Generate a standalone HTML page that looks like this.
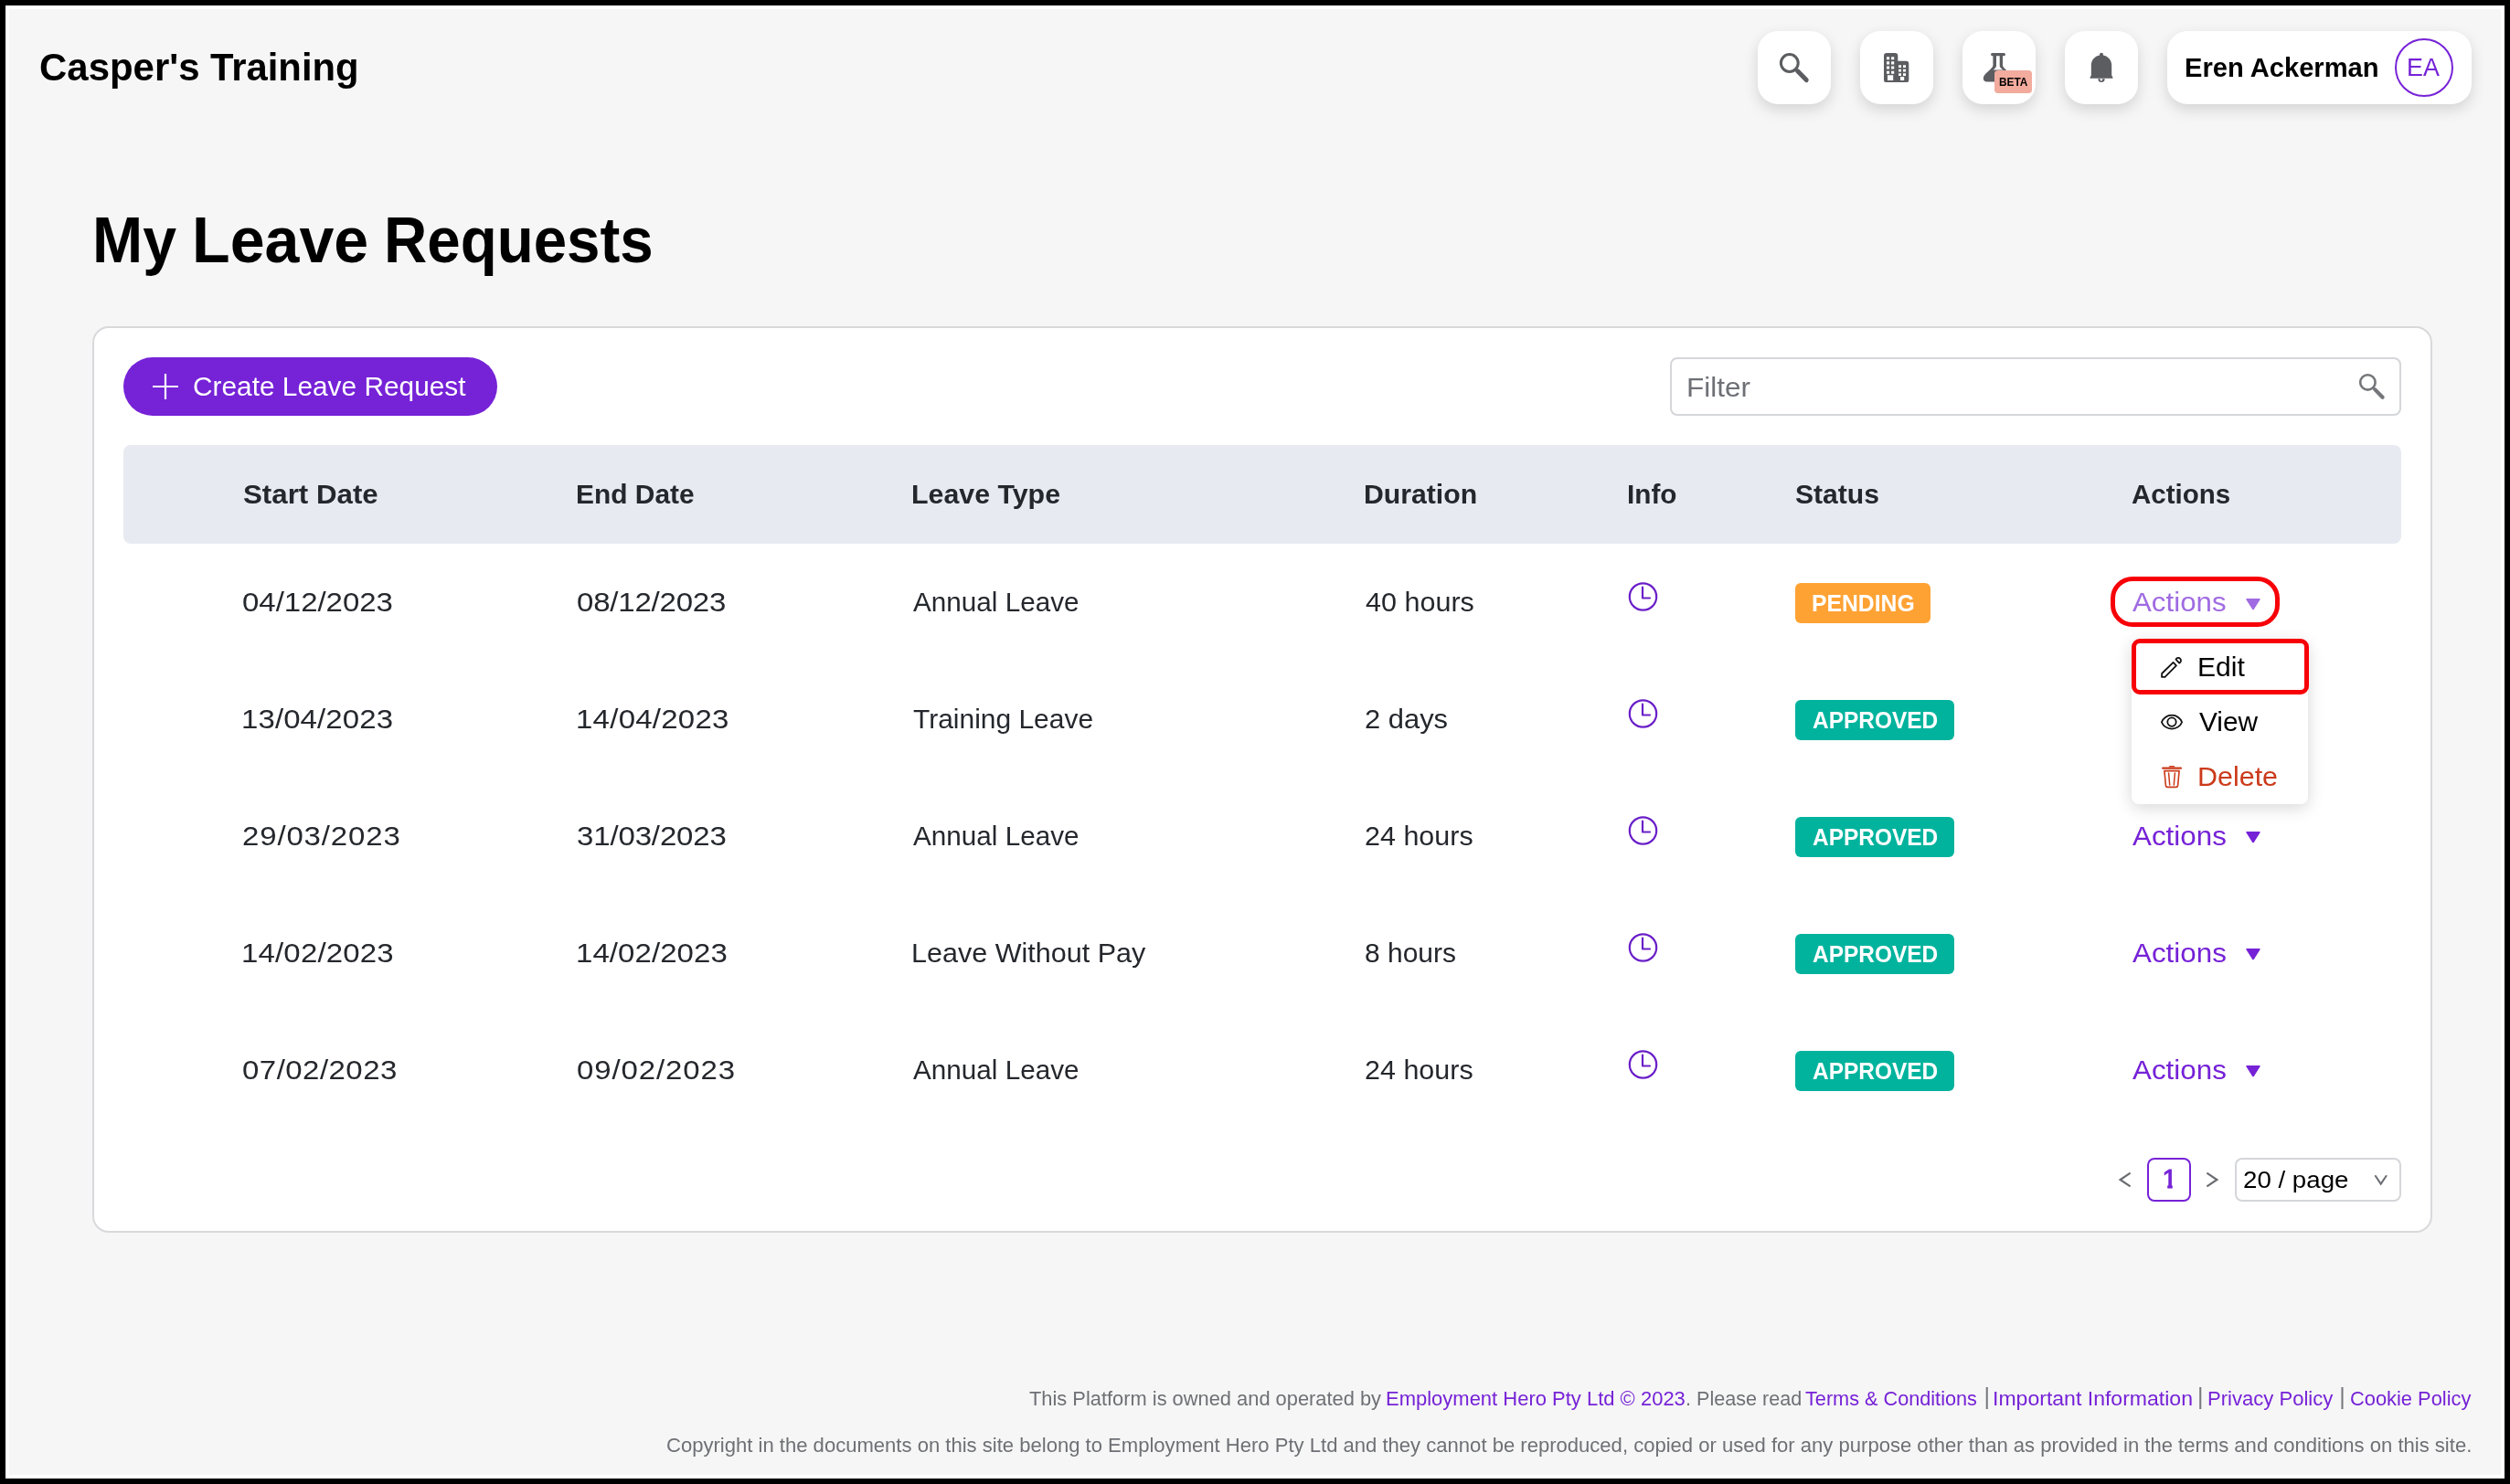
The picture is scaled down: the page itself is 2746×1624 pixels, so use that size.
<!DOCTYPE html>
<html lang="en">
<head>
<meta charset="utf-8">
<title>My Leave Requests</title>
<style>
*{box-sizing:border-box;margin:0;padding:0}
html,body{width:2746px;height:1624px;overflow:hidden;background:#000}
body{position:relative;font-family:"Liberation Sans",Arial,sans-serif}
.abs,.t,svg{position:absolute}
button{border:0;background:none;font:inherit;color:inherit;padding:0}
a{text-decoration:none}
h1{font-size:inherit;font-weight:inherit}
.t{white-space:nowrap;line-height:1;display:block}
.stroke{-webkit-text-stroke:.8px #7622d7;clip-path:polygon(0 0,100% 0,100% 21px,11.400px 21px,11.400px 100%,6px 100%,6px 21px,0 21px)}
.frame{left:6px;top:6px;width:2734px;height:1612px;background:#fff}
.page{left:10px;top:10px;width:2726px;height:1604px;background:#f6f6f6}
.hb{top:34px;width:80px;height:80px;border-radius:22px;background:#fff;box-shadow:0 6px 16px rgba(0,0,0,.14)}
.user{left:2371px;top:34px;width:333px;height:80px;border-radius:22px;background:#fff;box-shadow:0 6px 16px rgba(0,0,0,.14)}
.avatar{left:2620px;top:42px;width:64px;height:64px;border-radius:50%;border:2px solid #7622d7}
.beta{left:2182px;top:76.500px;width:41px;height:25px;border-radius:4px;background:#f2ab9d}
.card{left:101px;top:357px;width:2560px;height:992px;border:2px solid #d9d9dc;border-radius:18px;background:#fff}
.create{left:135px;top:391px;width:409px;height:64px;border-radius:32px;background:#7622d7}
.filter{left:1827px;top:391px;width:800px;height:64px;border:2px solid #d5d6d9;border-radius:8px;background:#fff}
.thead{left:135px;top:487px;width:2492px;height:108px;border-radius:8px;background:#e7ebf1}
.badge{left:1964px;height:44px;border-radius:6px}
.pending{width:148px;background:#ffa234}
.approved{width:174px;background:#01b39d}
.redpill{left:2309px;top:631px;width:185px;height:55px;border-radius:24px;border:5px solid #f70008}
.menu{left:2332px;top:700px;width:193px;height:180px;border-radius:8px;background:#fff;box-shadow:0 4px 18px rgba(0,0,0,.16)}
.redbox{left:2332px;top:699px;width:194px;height:61px;border-radius:9px;border:5px solid #f70008}
.pg1{left:2349px;top:1267px;width:48px;height:48px;border:2px solid #7622d7;border-radius:8px;background:#fff}
.psel{left:2445px;top:1267px;width:182px;height:48px;border:2px solid #d5d6d9;border-radius:8px;background:#fff}
</style>
</head>
<body>
<div class="abs" style="left:0;top:0;width:2746px;height:1624px;will-change:transform">
<div class="abs frame"></div>
<div class="abs page"></div>

<header>
<div class="brand">
<span class="t" style="left:42.6px;top:51.8px;font-size:43px;font-weight:700;color:#000;transform:scaleX(0.9757);transform-origin:0 0">Casper's</span>
<span class="t" style="left:229.6px;top:51.8px;font-size:43px;font-weight:700;color:#000;transform:scaleX(0.9723);transform-origin:0 0">Training</span>
</div>
<nav>
<button class="abs hb" style="left:1923px"></button>
<svg style="left:1943px;top:54px" width="40" height="40" viewBox="0 0 40 40"><circle cx="14.8" cy="15" r="9.4" fill="none" stroke="#5c5d61" stroke-width="3"/><path d="M23.6 23.800 L33.200 33.600" stroke="#5c5d61" stroke-width="5" stroke-linecap="round"/><path d="M21 21.200l3 3" stroke="#5c5d61" stroke-width="3"/></svg>
<button class="abs hb" style="left:2035px"></button>
<svg style="left:2059px;top:56px" width="32" height="36" viewBox="0 0 32 36"><path fill="#5c5d61" fill-rule="evenodd" d="M5 2h9.3a3 3 0 0 1 3 3v5.7h9a3 3 0 0 1 3 3V32a2 2 0 0 1-2 2H4a2 2 0 0 1-2-2V5a3 3 0 0 1 3-3z M5 6.3h3.1v3H5z M10.1 6.3h3.1v3h-3.1z M5 11.3h3.1v3.1H5z M10.1 11.3h3.1v3.1h-3.1z M5 16.4h3.1v3.1H5z M10.1 16.4h3.1v3.1h-3.1z M5 21.7h3.1v3H5z M10.1 21.7h3.1v3h-3.1z M6 26.2h6.2V32H6z M18.1 15.2H21v2.7h-2.9z M23 15.2h3v2.7h-3z M18.1 19.8H21v2.7h-2.9z M23 19.8h3v2.7h-3z M18.1 24.2H21v2.7h-2.9z M23 24.2h3v2.7h-3z M20 28h4.2v4H20z"/></svg>
<button class="abs hb" style="left:2147px"></button>
<svg style="left:2168px;top:56px" width="36" height="36" viewBox="0 0 36 36"><path fill="#5c5d61" fill-rule="evenodd" d="M11.600 2h12.800a1.600 1.600 0 0 1 0 3.200H23V15.500C23 19.500 33.600 24 34 29.500C34.200 32 32.500 33.600 30 33.600H6C3.500 33.600 1.600 32 1.800 29.500C2.200 24 12.400 19.500 12.400 15.500V5.200h-.800a1.600 1.600 0 0 1 0-3.200z M16 5.200V16C16 17.500 14.500 19 12.500 20.500H23.500C21.500 19 19.700 17.500 19.700 16V5.200z"/></svg>
<div class="abs beta"></div>
<span class="t" style="left:2186.6px;top:84px;font-size:12.5px;font-weight:700;color:#000;transform:scaleX(0.9494);transform-origin:0 0">BETA</span>
<button class="abs hb" style="left:2259px"></button>
<svg style="left:2285px;top:56px" width="28" height="36" viewBox="0 0 28 36"><path fill="#5c5d61" fill-rule="evenodd" d="M14 1.800a2 2 0 0 1 2 2v.800c5.300.900 9.200 5.400 9.200 10.900V26.500l1.300 2.300c.2.400 0 .9-.5.900H2c-.5 0-.7-.5-.5-.9l1.300-2.300V15.500c0-5.500 3.900-10 9.200-10.900v-.800a2 2 0 0 1 2-2z M10.300 30.200h7.400a3.700 3.700 0 0 1-7.400 0z M12.600 31.300a1.200 1.200 0 1 0 2.400 0a1.200 1.200 0 1 0-2.400 0z"/></svg>
<button class="abs user"></button>
<div class="abs avatar"></div>
<span class="t" style="left:2390.1px;top:58.6px;font-size:30px;font-weight:700;color:#000;transform:scaleX(0.9706);transform-origin:0 0">Eren Ackerman</span>
<span class="t" style="left:2632.9px;top:59.9px;font-size:28px;color:#7622d7;transform:scaleX(0.9586);transform-origin:0 0">EA</span>
</nav>
</header>

<main>
<h1>
<span class="t" style="left:101.1px;top:227.9px;font-size:70px;font-weight:700;color:#000;transform:scaleX(0.9463);transform-origin:0 0">My</span>
<span class="t" style="left:210.2px;top:227.9px;font-size:70px;font-weight:700;color:#000;transform:scaleX(0.9738);transform-origin:0 0">Leave</span>
<span class="t" style="left:419.8px;top:227.9px;font-size:70px;font-weight:700;color:#000;transform:scaleX(0.9351);transform-origin:0 0">Requests</span>
</h1>
<section>
<div class="abs card"></div>
<div class="toolbar">
<button class="abs create"></button>
<svg style="left:167px;top:409px" width="28" height="28" viewBox="0 0 28 28"><path d="M14 0v28M0 14h28" stroke="#fff" stroke-width="2.2"/></svg>
<span class="t" style="left:211.2px;top:408.2px;font-size:30px;color:#fff;transform:scaleX(0.9945);transform-origin:0 0">Create Leave Request</span>
<div class="abs filter"></div>
<span class="t" style="left:1844.9px;top:409.1px;font-size:30px;color:#6e7075;transform:scaleX(1.0514);transform-origin:0 0">Filter</span>
<svg style="left:2579px;top:407px" width="32" height="32" viewBox="0 0 32 32"><circle cx="11.400" cy="11.400" r="8.200" fill="none" stroke="#74767a" stroke-width="2.600"/><path d="M17.400 17.400L19.600 19.600" stroke="#74767a" stroke-width="2.600"/><path d="M19.400 19.400 L27.600 27.800" stroke="#74767a" stroke-width="4.200" stroke-linecap="round"/></svg>
</div>
<div class="table">
<div class="abs thead"></div>
<div class="row head">
<span class="t" style="left:266.3px;top:525.6px;font-size:30px;font-weight:700;color:#24272c;transform:scaleX(1.0424);transform-origin:0 0">Start Date</span>
<span class="t" style="left:630px;top:525.6px;font-size:30px;font-weight:700;color:#24272c;transform:scaleX(0.9974);transform-origin:0 0">End Date</span>
<span class="t" style="left:996.7px;top:525.6px;font-size:30px;font-weight:700;color:#24272c;transform:scaleX(1.0113);transform-origin:0 0">Leave Type</span>
<span class="t" style="left:1492.2px;top:525.6px;font-size:30px;font-weight:700;color:#24272c;transform:scaleX(1.0067);transform-origin:0 0">Duration</span>
<span class="t" style="left:1779.8px;top:525.6px;font-size:30px;font-weight:700;color:#24272c;transform:scaleX(0.9914);transform-origin:0 0">Info</span>
<span class="t" style="left:1964.4px;top:525.6px;font-size:30px;font-weight:700;color:#24272c;transform:scaleX(1.0033);transform-origin:0 0">Status</span>
<span class="t" style="left:2332.4px;top:525.6px;font-size:30px;font-weight:700;color:#24272c;transform:scaleX(0.9824);transform-origin:0 0">Actions</span>
</div>
<div class="row">
<span class="t" style="left:265.2px;top:643.9px;font-size:30px;color:#24272c;letter-spacing:-0.02px;transform:scaleX(1.1);transform-origin:0 0">04/12/2023</span>
<span class="t" style="left:631.4px;top:643.9px;font-size:30px;color:#24272c;letter-spacing:-0.18px;transform:scaleX(1.1);transform-origin:0 0">08/12/2023</span>
<span class="t" style="left:999.2px;top:643.9px;font-size:30px;color:#24272c;transform:scaleX(0.989);transform-origin:0 0">Annual Leave</span>
<span class="t" style="left:1494px;top:643.9px;font-size:30px;color:#24272c;transform:scaleX(1.0177);transform-origin:0 0">40 hours</span>
<svg style="left:1779px;top:635px" width="36" height="36" viewBox="0 0 36 36"><g fill="none" stroke="#6a1fc8" stroke-width="2.2" stroke-linecap="round" stroke-linejoin="round"><circle cx="18.5" cy="18" r="14.7"/><path d="M18 7.6V19.5H26"/></g></svg>
<div class="abs badge pending" style="top:638px"></div>
<span class="t" style="left:1981.5px;top:647.6px;font-size:25px;font-weight:700;color:#fff;transform:scaleX(0.9896);transform-origin:0 0">PENDING</span>
<div class="abs redpill"></div>
<span class="t" style="left:2332.5px;top:643.8px;font-size:30px;color:#a06be2;transform:scaleX(1.0423);transform-origin:0 0">Actions</span>
<svg style="left:2455px;top:654px" width="20" height="16" viewBox="0 0 20 16"><path d="M3.2 1.8h13.600L10 12.400z" fill="#a06be2" stroke="#a06be2" stroke-width="1.8" stroke-linejoin="round"/></svg>
</div>
<div class="row">
<span class="t" style="left:264.1px;top:771.9px;font-size:30px;color:#24272c;letter-spacing:0.09px;transform:scaleX(1.1);transform-origin:0 0">13/04/2023</span>
<span class="t" style="left:630.3px;top:771.9px;font-size:30px;color:#24272c;letter-spacing:0.23px;transform:scaleX(1.1);transform-origin:0 0">14/04/2023</span>
<span class="t" style="left:999.2px;top:771.9px;font-size:30px;color:#24272c;transform:scaleX(0.9987);transform-origin:0 0">Training Leave</span>
<span class="t" style="left:1493px;top:771.9px;font-size:30px;color:#24272c;transform:scaleX(1.0302);transform-origin:0 0">2 days</span>
<svg style="left:1779px;top:763px" width="36" height="36" viewBox="0 0 36 36"><g fill="none" stroke="#6a1fc8" stroke-width="2.2" stroke-linecap="round" stroke-linejoin="round"><circle cx="18.5" cy="18" r="14.7"/><path d="M18 7.6V19.5H26"/></g></svg>
<div class="abs badge approved" style="top:766px"></div>
<span class="t" style="left:1982.5px;top:775.6px;font-size:25px;font-weight:700;color:#fff;transform:scaleX(0.9774);transform-origin:0 0">APPROVED</span>
</div>
<div class="row">
<span class="t" style="left:265.2px;top:899.9px;font-size:30px;color:#24272c;letter-spacing:0.77px;transform:scaleX(1.1);transform-origin:0 0">29/03/2023</span>
<span class="t" style="left:631.4px;top:899.9px;font-size:30px;color:#24272c;letter-spacing:-0.13px;transform:scaleX(1.1);transform-origin:0 0">31/03/2023</span>
<span class="t" style="left:999.2px;top:899.9px;font-size:30px;color:#24272c;transform:scaleX(0.989);transform-origin:0 0">Annual Leave</span>
<span class="t" style="left:1493px;top:899.9px;font-size:30px;color:#24272c;transform:scaleX(1.0161);transform-origin:0 0">24 hours</span>
<svg style="left:1779px;top:891px" width="36" height="36" viewBox="0 0 36 36"><g fill="none" stroke="#6a1fc8" stroke-width="2.2" stroke-linecap="round" stroke-linejoin="round"><circle cx="18.5" cy="18" r="14.7"/><path d="M18 7.6V19.5H26"/></g></svg>
<div class="abs badge approved" style="top:894px"></div>
<span class="t" style="left:1982.5px;top:903.6px;font-size:25px;font-weight:700;color:#fff;transform:scaleX(0.9774);transform-origin:0 0">APPROVED</span>
<span class="t" style="left:2332.5px;top:899.6px;font-size:30px;color:#7622d7;transform:scaleX(1.0454);transform-origin:0 0">Actions</span>
<svg style="left:2455px;top:909px" width="20" height="16" viewBox="0 0 20 16"><path d="M3.2 1.8h13.600L10 12.400z" fill="#7622d7" stroke="#7622d7" stroke-width="1.8" stroke-linejoin="round"/></svg>
</div>
<div class="row">
<span class="t" style="left:264.1px;top:1027.9px;font-size:30px;color:#24272c;letter-spacing:0.15px;transform:scaleX(1.1);transform-origin:0 0">14/02/2023</span>
<span class="t" style="left:630.3px;top:1027.9px;font-size:30px;color:#24272c;letter-spacing:0.06px;transform:scaleX(1.1);transform-origin:0 0">14/02/2023</span>
<span class="t" style="left:997.2px;top:1027.9px;font-size:30px;color:#24272c;transform:scaleX(1.018);transform-origin:0 0">Leave Without Pay</span>
<span class="t" style="left:1493px;top:1027.9px;font-size:30px;color:#24272c;transform:scaleX(0.9994);transform-origin:0 0">8 hours</span>
<svg style="left:1779px;top:1019px" width="36" height="36" viewBox="0 0 36 36"><g fill="none" stroke="#6a1fc8" stroke-width="2.2" stroke-linecap="round" stroke-linejoin="round"><circle cx="18.5" cy="18" r="14.7"/><path d="M18 7.6V19.5H26"/></g></svg>
<div class="abs badge approved" style="top:1022px"></div>
<span class="t" style="left:1982.5px;top:1031.6px;font-size:25px;font-weight:700;color:#fff;transform:scaleX(0.9774);transform-origin:0 0">APPROVED</span>
<span class="t" style="left:2332.5px;top:1027.6px;font-size:30px;color:#7622d7;transform:scaleX(1.0454);transform-origin:0 0">Actions</span>
<svg style="left:2455px;top:1037px" width="20" height="16" viewBox="0 0 20 16"><path d="M3.2 1.8h13.600L10 12.400z" fill="#7622d7" stroke="#7622d7" stroke-width="1.8" stroke-linejoin="round"/></svg>
</div>
<div class="row">
<span class="t" style="left:265.2px;top:1155.9px;font-size:30px;color:#24272c;letter-spacing:0.42px;transform:scaleX(1.1);transform-origin:0 0">07/02/2023</span>
<span class="t" style="left:631.4px;top:1155.9px;font-size:30px;color:#24272c;letter-spacing:0.81px;transform:scaleX(1.1);transform-origin:0 0">09/02/2023</span>
<span class="t" style="left:999.2px;top:1155.9px;font-size:30px;color:#24272c;transform:scaleX(0.989);transform-origin:0 0">Annual Leave</span>
<span class="t" style="left:1493px;top:1155.9px;font-size:30px;color:#24272c;transform:scaleX(1.0161);transform-origin:0 0">24 hours</span>
<svg style="left:1779px;top:1147px" width="36" height="36" viewBox="0 0 36 36"><g fill="none" stroke="#6a1fc8" stroke-width="2.2" stroke-linecap="round" stroke-linejoin="round"><circle cx="18.5" cy="18" r="14.7"/><path d="M18 7.6V19.5H26"/></g></svg>
<div class="abs badge approved" style="top:1150px"></div>
<span class="t" style="left:1982.5px;top:1159.6px;font-size:25px;font-weight:700;color:#fff;transform:scaleX(0.9774);transform-origin:0 0">APPROVED</span>
<span class="t" style="left:2332.5px;top:1155.6px;font-size:30px;color:#7622d7;transform:scaleX(1.0454);transform-origin:0 0">Actions</span>
<svg style="left:2455px;top:1165px" width="20" height="16" viewBox="0 0 20 16"><path d="M3.2 1.8h13.600L10 12.400z" fill="#7622d7" stroke="#7622d7" stroke-width="1.8" stroke-linejoin="round"/></svg>
</div>
</div>
<div class="dropdown">
<div class="abs menu"></div>
<div class="abs redbox"></div>
<div class="item">
<svg style="left:2361px;top:716px" width="28" height="28" viewBox="0 0 28 28"><g fill="none" stroke="#111" stroke-width="1.800" stroke-linejoin="round"><path d="M4.200 21L16.600 8.900L19.900 12.400L7.500 24.800H4z"/><path d="M19.500 5.700L23.200 9.600C25.200 8.800 25.600 6.200 24.200 4.800C22.800 3.400 20.300 3.700 19.500 5.700Z"/></g></svg>
<span class="t" style="left:2404px;top:715.1px;font-size:30px;color:#000;transform:scaleX(1.0028);transform-origin:0 0">Edit</span>
</div>
<div class="item">
<svg style="left:2362px;top:776px" width="28" height="28" viewBox="0 0 28 28"><g fill="none" stroke="#111" stroke-width="1.800" stroke-linejoin="round"><path d="M2.900 14.200C4.300 10.400 8.700 6.700 14 6.700S23.700 10.400 25.100 14.200C23.700 18 19.300 21.700 14 21.700S4.300 18 2.900 14.200z"/><circle cx="14" cy="14.100" r="4.700"/></g></svg>
<span class="t" style="left:2405.5px;top:775.1px;font-size:30px;color:#000;transform:scaleX(0.9951);transform-origin:0 0">View</span>
</div>
<div class="item">
<svg style="left:2362px;top:836px" width="28" height="28" viewBox="0 0 28 28"><path d="M4.200 4.700H23.900" stroke="#cb3a1a" stroke-width="2.300" stroke-linecap="round"/><path d="M10.500 3.600L11.700 2H16.500L17.700 3.600z" fill="#cb3a1a"/><g fill="none" stroke="#cb3a1a" stroke-width="1.600" stroke-linejoin="round" stroke-linecap="round"><path d="M5.900 7.600H22.100L20.600 23.600Q20.400 25.400 18.600 25.400H9.400Q7.600 25.400 7.400 23.600Z"/><path d="M10.600 10L11.700 23M17.400 10L16.300 23" stroke-width="1.500"/></g></svg>
<span class="t" style="left:2404.3px;top:835px;font-size:30px;color:#cb3a1a;transform:scaleX(1.0151);transform-origin:0 0">Delete</span>
</div>
</div>
<nav class="pager">
<svg style="left:2316px;top:1281px" width="18" height="20" viewBox="0 0 18 20"><path d="M14.600 2.600L3.600 10l11 7.400" fill="none" stroke="#6a6c71" stroke-width="2.200"/></svg>
<div class="abs pg1"></div>
<span class="t stroke" style="left:2365.3px;top:1275.4px;font-size:30px;color:#7622d7">1</span>
<svg style="left:2411px;top:1281px" width="18" height="20" viewBox="0 0 18 20"><path d="M3.400 2.600l11 7.400-11 7.400" fill="none" stroke="#6a6c71" stroke-width="2.200"/></svg>
<div class="abs psel"></div>
<span class="t" style="left:2454.4px;top:1277.9px;font-size:26.5px;color:#000;transform:scaleX(1.0443);transform-origin:0 0">20 / page</span>
<svg style="left:2596px;top:1283px" width="18" height="16" viewBox="0 0 18 16"><path d="M2.400 3.200L8.700 12.600 15 3.200" fill="none" stroke="#6a6c71" stroke-width="2"/></svg>
</nav>
</section>
</main>

<footer>
<p>
<span class="t" style="left:1126px;top:1519.6px;font-size:22px;color:#6e7075;transform:scaleX(0.9932);transform-origin:0 0">This Platform is owned and operated by</span>
<a class="t" href="#" style="left:1516px;top:1519.6px;font-size:22px;color:#7622d7;transform:scaleX(0.9994);transform-origin:0 0">Employment Hero Pty Ltd © 2023</a>
<span class="t" style="left:1843.5px;top:1519.6px;font-size:22px;color:#6e7075;transform:scaleX(0.981);transform-origin:0 0">. Please read</span>
<a class="t" href="#" style="left:1975.4px;top:1519.6px;font-size:22px;color:#7622d7;transform:scaleX(0.9851);transform-origin:0 0">Terms &amp; Conditions</a>
<span class="t" style="left:2170.6px;top:1515.8px;font-size:25px;color:#77797e">|</span>
<a class="t" href="#" style="left:2180.3px;top:1519.6px;font-size:22px;color:#7622d7;transform:scaleX(1.0473);transform-origin:0 0">Important Information</a>
<span class="t" style="left:2404px;top:1515.8px;font-size:25px;color:#77797e">|</span>
<a class="t" href="#" style="left:2415px;top:1519.6px;font-size:22px;color:#7622d7;transform:scaleX(1.0028);transform-origin:0 0">Privacy Policy</a>
<span class="t" style="left:2559.2px;top:1515.8px;font-size:25px;color:#77797e">|</span>
<a class="t" href="#" style="left:2570.6px;top:1519.6px;font-size:22px;color:#7622d7;transform:scaleX(0.9934);transform-origin:0 0">Cookie Policy</a>
</p>
<p>
<span class="t" style="left:728.9px;top:1571px;font-size:22px;color:#6e7075;transform:scaleX(1.0026);transform-origin:0 0">Copyright in the documents on this site belong to Employment Hero Pty Ltd and they cannot be reproduced, copied or used for any purpose other than as provided in the terms and conditions on this site.</span>
</p>
</footer>
</div>
</body>
</html>
